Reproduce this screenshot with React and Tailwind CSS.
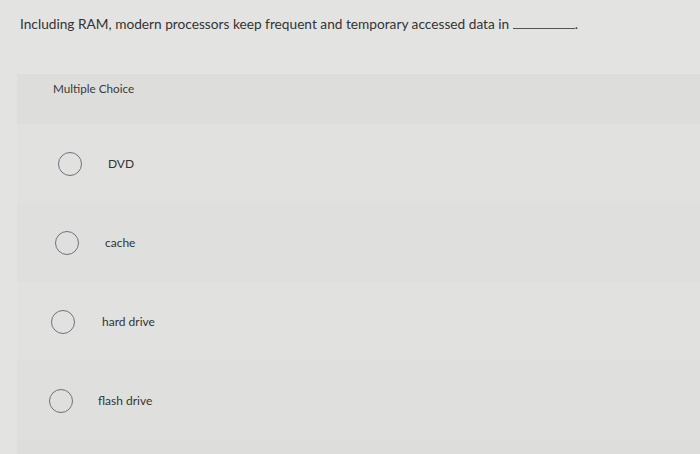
export default function App() {
  const options = [
    { label: 'DVD', circle: 'pl-[41px]', gap: 'gap-[26px]' },
    { label: 'cache', circle: 'pl-[38px]', gap: 'gap-[26px]' },
    { label: 'hard drive', circle: 'pl-[34px]', gap: 'gap-[27px]' },
    { label: 'flash drive', circle: 'pl-[32px]', gap: 'gap-[25px]' },
  ]

  return (
    <div className="h-[454px] w-[700px] overflow-hidden bg-[#e3e4e2] font-['Lato',sans-serif] text-[#333]">
      <div className="h-[74px] pl-[20px] pt-[15px]">
        <p className="text-[13.7px] leading-[18px]">
          Including RAM, modern processors keep frequent and temporary accessed data in{' '}
          <span className="inline-block w-[62px] border-b border-[#555] align-baseline" />.
        </p>
      </div>

      <div className="ml-[17px] h-[380px] bg-[#dddedc]">
        <div className="pl-[36px] pt-[7px] text-[11.7px] leading-[14px] text-[#3a3a3a]">Multiple Choice</div>
        <div className="mt-[29px]">
          {options.map((o, i) => (
            <div
              key={o.label}
              className={`flex h-[79px] items-center ${o.circle} ${o.gap} ${
                i % 2 === 0 ? 'bg-[#e1e2e0]' : 'bg-[#dfe0de]'
              }`}
            >
              <span className="h-[24px] w-[24px] shrink-0 rounded-full border-[1.5px] border-[#6d717a]" />
              <span className="text-[12px] text-[#333]">{o.label}</span>
            </div>
          ))}
        </div>
      </div>
    </div>
  )
}
